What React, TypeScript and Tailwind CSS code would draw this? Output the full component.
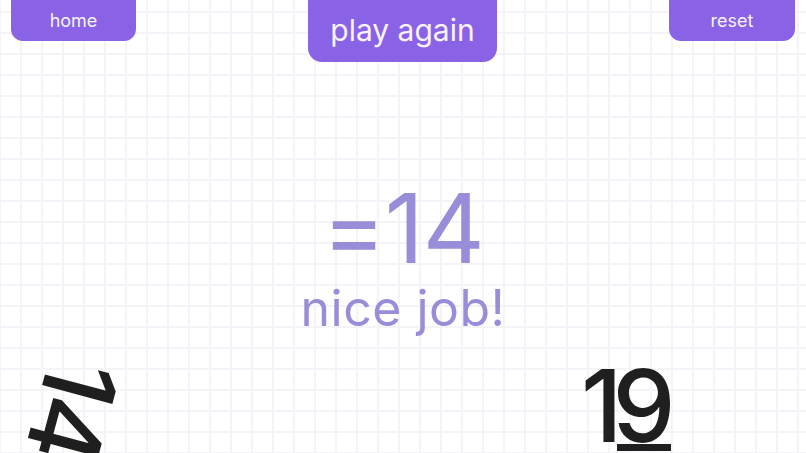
const buttonBase =
  "flex items-center justify-center bg-[#8a62e6] text-[#f7f3ff] leading-none";

export default function App() {
  return (
    <div className="relative h-[453px] w-full overflow-hidden bg-white bg-[linear-gradient(to_right,#f4f3f8_2px,transparent_2px),linear-gradient(to_bottom,#f4f3f8_2px,transparent_2px)] bg-[size:21px_21px] bg-[position:-1px_11px] font-['Inter',sans-serif]">
      {/* top bar */}
      <div className="flex items-start justify-between px-[11px]">
        <button className={`${buttonBase} h-[41px] w-[125px] rounded-b-[12px] text-[18px]`}>home</button>
        <button className={`${buttonBase} h-[62px] w-[189px] rounded-b-[14px] pb-[2px] text-[30px]`}>play again</button>
        <button className={`${buttonBase} h-[41px] w-[126px] rounded-b-[12px] text-[18px]`}>reset</button>
      </div>

      {/* result */}
      <div className="mt-[118px] flex flex-col items-center text-[#988dd9]">
        <div className="text-[96px] leading-none tracking-[-1px]">=14</div>
        <div className="mt-[7px] text-[50px] leading-none tracking-[0.5px]">nice job!</div>
      </div>

      {/* cards left on the table */}
      <div className="absolute left-[23px] top-[360px] rotate-[105deg] text-[100px] font-medium leading-none text-[#1f1f1f] tracking-[-4px]">
        14
      </div>
      <div className="absolute left-[581px] top-[356px] flex text-[100px] font-medium leading-none text-[#1f1f1f]">
        <span className="w-[36px]">1</span>
        <span className="relative flex w-[54px] justify-center">
          9
          <span className="absolute left-0 right-0 top-[88px] h-[7px] bg-[#1f1f1f]" />
        </span>
      </div>
    </div>
  );
}
